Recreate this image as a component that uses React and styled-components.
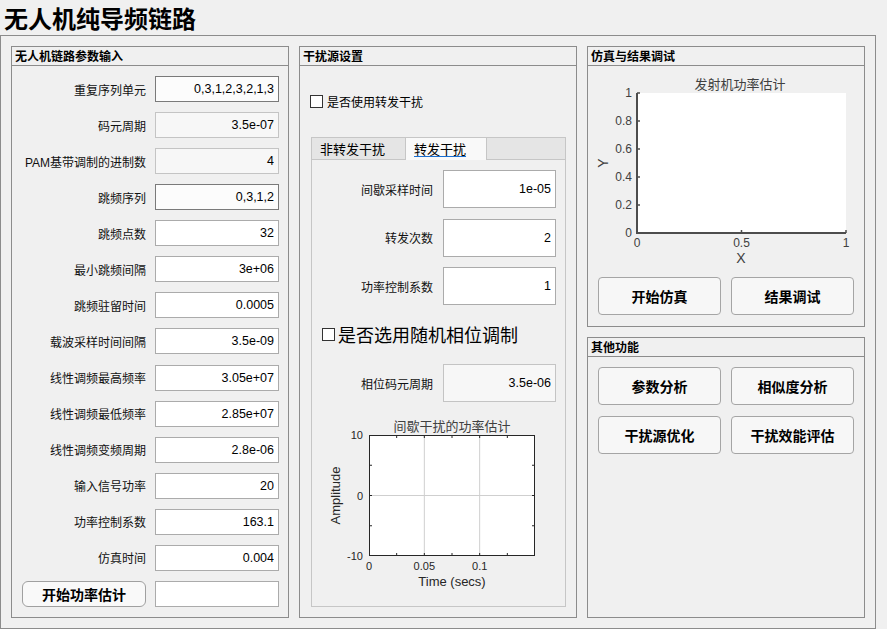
import React from "react";
import styled, { createGlobalStyle } from "styled-components";

const GlobalStyle = createGlobalStyle`
  html, body {
    margin: 0;
    padding: 0;
    background: #f0f0f0;
  }
  body {
    font-family: "Liberation Sans", "Noto Sans CJK SC", sans-serif;
    color: #000;
  }
  * {
    box-sizing: border-box;
  }
`;

const params = [
  ["重复序列单元", "0,3,1,2,3,2,1,3", "dark"],
  ["码元周期", "3.5e-07", "off"],
  ["PAM基带调制的进制数", "4", "off"],
  ["跳频序列", "0,3,1,2", "dark"],
  ["跳频点数", "32"],
  ["最小跳频间隔", "3e+06"],
  ["跳频驻留时间", "0.0005"],
  ["载波采样时间间隔", "3.5e-09"],
  ["线性调频最高频率", "3.05e+07"],
  ["线性调频最低频率", "2.85e+07"],
  ["线性调频变频周期", "2.8e-06"],
  ["输入信号功率", "20"],
  ["功率控制系数", "163.1"],
  ["仿真时间", "0.004"],
];

const relayParams = [
  ["间歇采样时间", "1e-05"],
  ["转发次数", "2"],
  ["功率控制系数", "1"],
];

// 发射机功率估计 (y 轴 0~1)
const TransmitterChart = () => {
  const left = 49;
  const right = 258;
  const top = 27;
  const bottom = 167;
  const yTicks = [0, 0.2, 0.4, 0.6, 0.8, 1];
  const xTicks = [0, 0.5, 1];
  const yPos = (v) => bottom - v * (bottom - top);
  const xPos = (v) => left + v * (right - left);
  return (
    <svg width="276" height="201">
      <text x="152" y="17" fontSize="13" fill="#404040" textAnchor="middle" dominantBaseline="central" fontFamily="Noto Sans CJK SC, sans-serif">
        发射机功率估计
      </text>
      <rect x={left} y={top} width={right - left} height={bottom - top} fill="#fff" />
      {yTicks.map((v) => (
        <g key={v}>
          <line x1={left} x2={left + 3} y1={yPos(v)} y2={yPos(v)} stroke="#4d4d4d" strokeWidth="1.5" />
          <text x={left - 5} y={yPos(v)} fontSize="12" fill="#404040" textAnchor="end" dominantBaseline="central" fontFamily="Liberation Sans, sans-serif">
            {v}
          </text>
        </g>
      ))}
      {xTicks.map((v) => (
        <g key={v}>
          <line x1={xPos(v)} x2={xPos(v)} y1={bottom} y2={bottom - 3} stroke="#4d4d4d" strokeWidth="1.5" />
          <text x={xPos(v)} y={bottom + 10} fontSize="12" fill="#404040" textAnchor="middle" dominantBaseline="central" fontFamily="Liberation Sans, sans-serif">
            {v}
          </text>
        </g>
      ))}
      <line x1={left} x2={left} y1={top} y2={bottom + 1} stroke="#4d4d4d" strokeWidth="2" />
      <line x1={left - 1} x2={right} y1={bottom} y2={bottom} stroke="#4d4d4d" strokeWidth="2" />
      <text x="153" y="192" fontSize="14" fill="#404040" textAnchor="middle" dominantBaseline="central" fontFamily="Liberation Sans, sans-serif">
        X
      </text>
      <text x="15" y="97" fontSize="14" fill="#404040" textAnchor="middle" dominantBaseline="central" fontFamily="Liberation Sans, sans-serif" transform="rotate(-90 15 97)">
        Y
      </text>
    </svg>
  );
};

// 间歇干扰的功率估计 (示波器样式)
const IntermittentChart = () => {
  const left = 57;
  const right = 223;
  const top = 24;
  const bottom = 145;
  const xPos = (v) => left + (v / 0.15) * (right - left);
  const yPos = (v) => top + ((10 - v) / 20) * (bottom - top);
  const xMajor = [0, 0.05, 0.1];
  const xMinor = [0.025, 0.05, 0.075, 0.1, 0.125];
  const yMinor = [5, 0, -5];
  return (
    <svg width="253" height="185">
      <text x="140" y="14" fontSize="13" fill="#404040" textAnchor="middle" dominantBaseline="central" fontFamily="Noto Sans CJK SC, sans-serif">
        间歇干扰的功率估计
      </text>
      <rect x={left} y={top} width={right - left} height={bottom - top} fill="#fff" />
      {[0.05, 0.1].map((v) => (
        <line key={v} x1={xPos(v)} x2={xPos(v)} y1={top} y2={bottom} stroke="#cfcfcf" strokeWidth="1" />
      ))}
      <line x1={left} x2={right} y1={yPos(0)} y2={yPos(0)} stroke="#cfcfcf" strokeWidth="1" />
      {xMinor.map((v) => (
        <g key={v}>
          <line x1={xPos(v)} x2={xPos(v)} y1={top} y2={top + 3} stroke="#262626" />
          <line x1={xPos(v)} x2={xPos(v)} y1={bottom} y2={bottom - 3} stroke="#262626" />
        </g>
      ))}
      {yMinor.map((v) => (
        <g key={v}>
          <line x1={left} x2={left + 3} y1={yPos(v)} y2={yPos(v)} stroke="#262626" />
          <line x1={right} x2={right - 3} y1={yPos(v)} y2={yPos(v)} stroke="#262626" />
        </g>
      ))}
      <rect x={left + 0.5} y={top + 0.5} width={right - left - 1} height={bottom - top - 1} fill="none" stroke="#262626" strokeWidth="1" />
      {[10, 0, -10].map((v) => (
        <text key={v} x={left - 6} y={yPos(v)} fontSize="11" fill="#262626" textAnchor="end" dominantBaseline="central" fontFamily="Liberation Sans, sans-serif">
          {v}
        </text>
      ))}
      {xMajor.map((v) => (
        <text key={v} x={xPos(v)} y={155} fontSize="11" fill="#262626" textAnchor="middle" dominantBaseline="central" fontFamily="Liberation Sans, sans-serif">
          {v}
        </text>
      ))}
      <text x="140" y="170" fontSize="13" fill="#262626" textAnchor="middle" dominantBaseline="central" fontFamily="Liberation Sans, sans-serif">
        Time (secs)
      </text>
      <text x="23" y={yPos(0)} fontSize="13" fill="#262626" textAnchor="middle" dominantBaseline="central" fontFamily="Liberation Sans, sans-serif" transform={`rotate(-90 23 ${yPos(0)})`}>
        Amplitude
      </text>
    </svg>
  );
};

const App = () => {
  return (
    <Window>
      <GlobalStyle />
      <Title>无人机纯导频链路</Title>
      <Frame>
        <Column>
          <Panel>
            <PanelHeader>无人机链路参数输入</PanelHeader>
            <ParamGrid>
              {params.map(([label, value, tone]) => (
                <React.Fragment key={label}>
                  <Label>{label}</Label>
                  <Field readOnly value={value} $tone={tone} />
                </React.Fragment>
              ))}
              <EstimateButton>开始功率估计</EstimateButton>
              <Field readOnly value="" />
            </ParamGrid>
          </Panel>
        </Column>

        <Column>
          <Panel>
            <PanelHeader>干扰源设置</PanelHeader>
            <MiddleBody>
              <CheckRow>
                <Box />
                是否使用转发干扰
              </CheckRow>
              <TabGroup>
                <TabStrip>
                  <Tab>非转发干扰</Tab>
                  <Tab $active>
                    <TabText>转发干扰</TabText>
                  </Tab>
                  <TabFill />
                </TabStrip>
                <TabBody>
                  <RelayGrid>
                    {relayParams.map(([label, value]) => (
                      <React.Fragment key={label}>
                        <Label>{label}</Label>
                        <Field readOnly value={value} />
                      </React.Fragment>
                    ))}
                  </RelayGrid>
                  <BigCheckRow>
                    <Box />
                    是否选用随机相位调制
                  </BigCheckRow>
                  <RelayGrid $mt={18}>
                    <Label>相位码元周期</Label>
                    <Field readOnly value="3.5e-06" $tone="off" />
                  </RelayGrid>
                  <ChartSlot>
                    <IntermittentChart />
                  </ChartSlot>
                </TabBody>
              </TabGroup>
            </MiddleBody>
          </Panel>
        </Column>

        <Column>
          <Panel>
            <PanelHeader>仿真与结果调试</PanelHeader>
            <TransmitterChart />
            <ButtonGrid>
              <ActionButton>开始仿真</ActionButton>
              <ActionButton>结果调试</ActionButton>
            </ButtonGrid>
          </Panel>
          <Panel>
            <PanelHeader>其他功能</PanelHeader>
            <ButtonGrid $mt={10}>
              <ActionButton>参数分析</ActionButton>
              <ActionButton>相似度分析</ActionButton>
              <ActionButton>干扰源优化</ActionButton>
              <ActionButton>干扰效能评估</ActionButton>
            </ButtonGrid>
          </Panel>
        </Column>
      </Frame>
    </Window>
  );
};

const Window = styled.div`
  width: 887px;
  height: 629px;
  overflow: hidden;
  background: #f0f0f0;
`;

const Title = styled.h1`
  margin: 0;
  height: 35px;
  padding-left: 4px;
  font-family: "Noto Sans CJK SC", sans-serif;
  font-size: 24px;
  font-weight: bold;
  line-height: 35px;
  color: #000;
`;

const Frame = styled.div`
  width: 876px;
  height: 594px;
  border: 1px solid #8c8c8c;
  padding: 10px;
  display: flex;
  gap: 10px;
`;

const Column = styled.div`
  width: 278px;
  display: flex;
  flex-direction: column;
  gap: 10px;
`;

const Panel = styled.div`
  flex: 1;
  border: 1px solid #8c8c8c;
  display: flex;
  flex-direction: column;
`;

const PanelHeader = styled.div`
  height: 19px;
  border-bottom: 1px solid #8c8c8c;
  padding-left: 3px;
  font-family: "Noto Sans CJK SC", sans-serif;
  font-size: 12px;
  font-weight: bold;
  line-height: 18px;
`;

const ParamGrid = styled.div`
  display: grid;
  grid-template-columns: 124px 124px;
  grid-auto-rows: 26px;
  column-gap: 9px;
  row-gap: 10.07px;
  padding: 10px 9px 0 10px;
  align-items: center;
`;

const Label = styled.div`
  text-align: right;
  font-size: 12px;
  white-space: nowrap;
  color: #111;
`;

const tones = {
  dark: { border: "#7a7a7a", bg: "#fcfcfc" },
  off: { border: "#c4c4c4", bg: "#f7f7f7" },
  plain: { border: "#ababab", bg: "#ffffff" },
};

const Field = styled.input`
  width: 100%;
  height: 100%;
  margin: 0;
  padding: 0 4px;
  border: 1px solid ${({ $tone }) => (tones[$tone] || tones.plain).border};
  background: ${({ $tone }) => (tones[$tone] || tones.plain).bg};
  border-radius: 0;
  font-family: "Liberation Sans", sans-serif;
  font-size: 12.5px;
  color: #000;
  text-align: right;
  outline: none;
`;

const EstimateButton = styled.button`
  height: 100%;
  margin: 0;
  padding: 0;
  border: 1px solid #a0a0a0;
  border-radius: 6px;
  background: #f9f9f9;
  font-family: "Noto Sans CJK SC", sans-serif;
  font-size: 14px;
  font-weight: bold;
  color: #000;
`;

const MiddleBody = styled.div`
  flex: 1;
  display: flex;
  flex-direction: column;
  padding: 25px 10px 10px 11px;
`;

const CheckRow = styled.label`
  height: 20px;
  display: flex;
  align-items: center;
  gap: 4px;
  margin-left: -1px;
  font-family: "Noto Sans CJK SC", sans-serif;
  font-size: 12px;
`;

const Box = styled.span`
  width: 13px;
  height: 13px;
  border: 1px solid #333;
  background: #fff;
  flex: none;
`;

const TabGroup = styled.div`
  flex: 1;
  margin-top: 26px;
  border: 1px solid #c6c6c6;
  display: flex;
  flex-direction: column;
`;

const TabStrip = styled.div`
  height: 22px;
  display: flex;
`;

const Tab = styled.div`
  padding: 0 20px 0 8px;
  font-family: "Noto Sans CJK SC", sans-serif;
  font-size: 13px;
  line-height: 21px;
  background: ${({ $active }) => ($active ? "#f9f9f9" : "#e5e5e5")};
  border-right: 1px solid #c6c6c6;
  border-bottom: ${({ $active }) => ($active ? "none" : "1px solid #c6c6c6")};
`;

const TabText = styled.span`
  text-decoration: underline;
  text-decoration-color: #1a6fd1;
  text-underline-offset: 2px;
`;

const TabFill = styled.div`
  flex: 1;
  background: #e5e5e5;
  border-bottom: 1px solid #c6c6c6;
`;

const TabBody = styled.div`
  flex: 1;
  display: flex;
  flex-direction: column;
  padding: 10px 9px 0 0;
`;

const RelayGrid = styled.div`
  display: grid;
  grid-template-columns: 1fr 113px;
  grid-auto-rows: 38px;
  column-gap: 10px;
  row-gap: 10.5px;
  align-items: center;
  margin-top: ${({ $mt }) => $mt || 0}px;
`;

const BigCheckRow = styled.label`
  height: 24px;
  margin-top: 17px;
  padding-left: 10px;
  display: flex;
  align-items: center;
  gap: 3px;
  font-family: "Noto Sans CJK SC", sans-serif;
  font-size: 18px;
`;

const ChartSlot = styled.div`
  margin-top: 9px;
  height: 185px;
`;

const ButtonGrid = styled.div`
  display: grid;
  grid-template-columns: 1fr 1fr;
  grid-auto-rows: 38px;
  column-gap: 10px;
  row-gap: 11px;
  padding: 0 10px;
  margin-top: ${({ $mt }) => $mt || 10}px;
`;

const ActionButton = styled.button`
  margin: 0;
  padding: 0;
  border: 1px solid #a5a5a5;
  border-radius: 4px;
  background: #f7f7f7;
  font-family: "Noto Sans CJK SC", sans-serif;
  font-size: 14px;
  font-weight: bold;
  color: #000;
`;

export default App;
